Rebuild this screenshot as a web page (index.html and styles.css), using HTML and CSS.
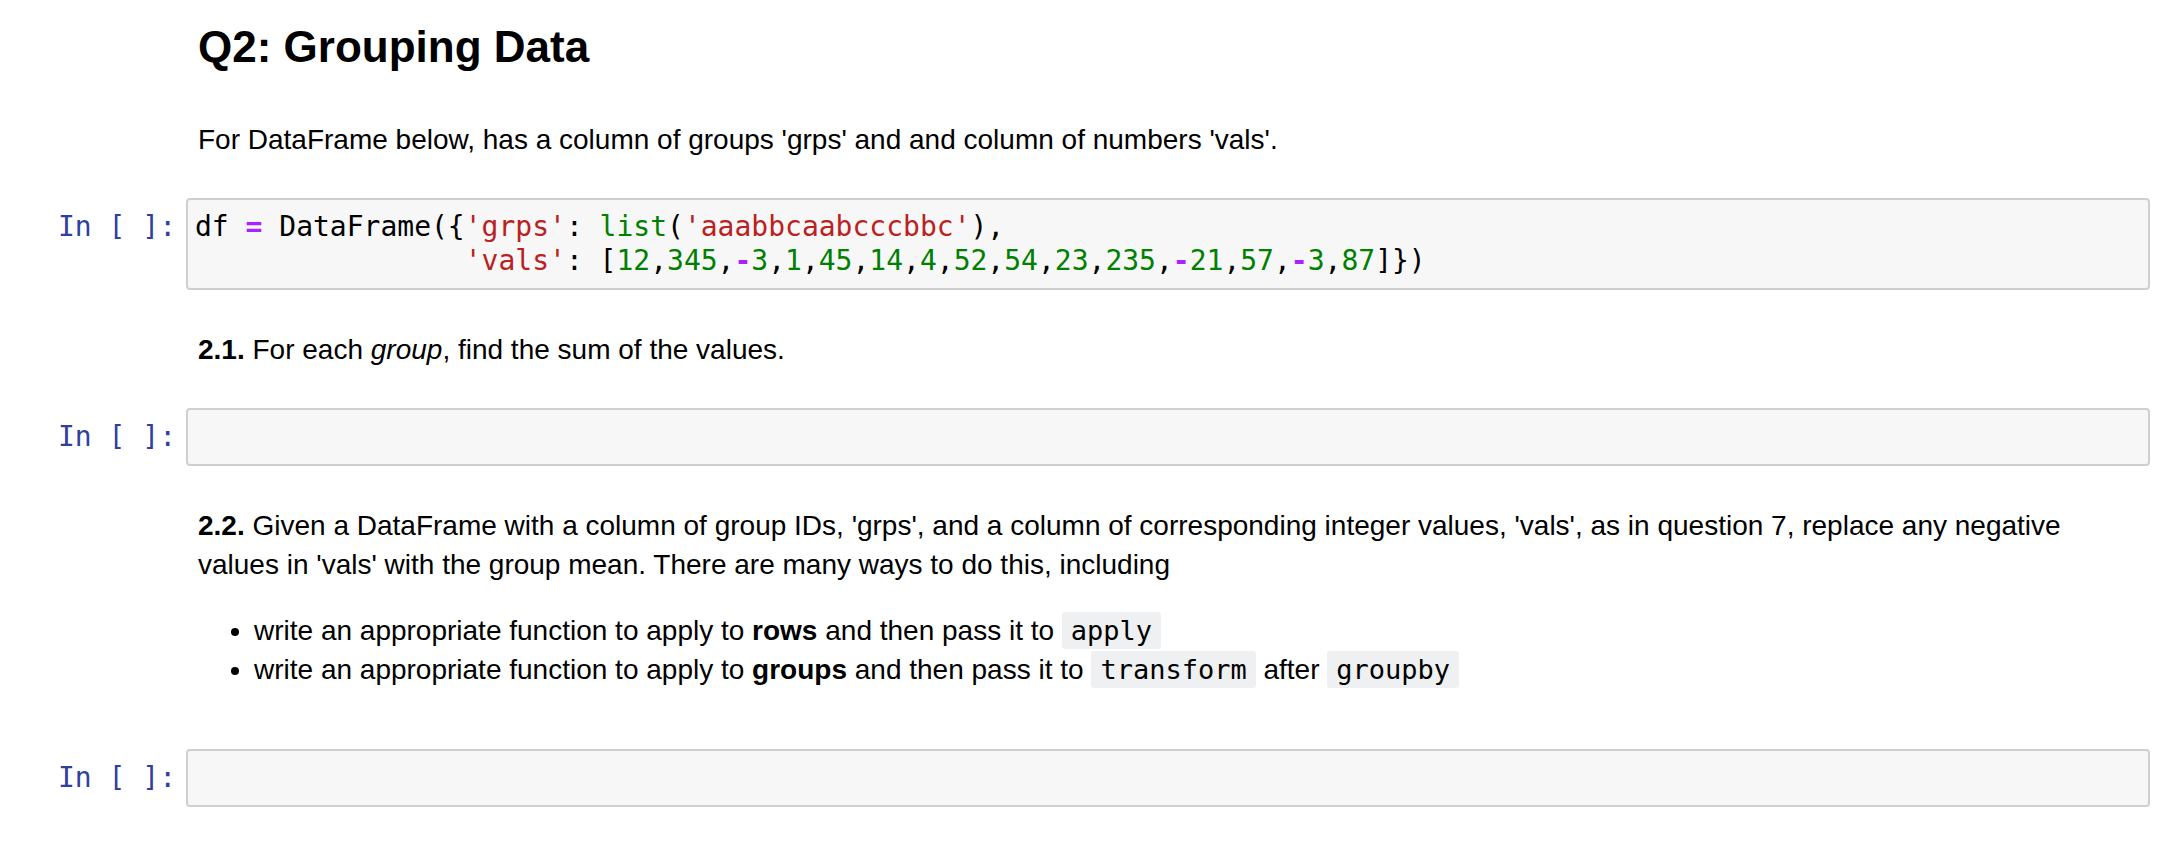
FILE: index.html
```html
<!DOCTYPE html>
<html>
<head>
<meta charset="utf-8">
<link rel="stylesheet" href="styles.css">
</head>
<body>
<div class="nb">
  <div class="cell md first">
    <div class="prompt"></div>
    <div class="md-body">
      <h2 class="title">Q2: Grouping Data</h2>
      <p class="para p1">For DataFrame below, has a column of groups 'grps' and and column of numbers 'vals'.</p>
    </div>
  </div>

  <div class="cell code c1">
    <div class="prompt">In&nbsp;[&nbsp;]:</div>
    <div class="input"><pre class="src">df <span class="op">=</span> DataFrame({<span class="str">'grps'</span>: <span class="bi">list</span>(<span class="str">'aaabbcaabcccbbc'</span>),
                <span class="str">'vals'</span>: [<span class="num">12</span>,<span class="num">345</span>,<span class="op">-</span><span class="num">3</span>,<span class="num">1</span>,<span class="num">45</span>,<span class="num">14</span>,<span class="num">4</span>,<span class="num">52</span>,<span class="num">54</span>,<span class="num">23</span>,<span class="num">235</span>,<span class="op">-</span><span class="num">21</span>,<span class="num">57</span>,<span class="op">-</span><span class="num">3</span>,<span class="num">87</span>]})</pre></div>
  </div>

  <div class="cell md m2">
    <div class="prompt"></div>
    <div class="md-body">
      <p class="para"><strong>2.1.</strong> For each <em>group</em>, find the sum of the values.</p>
    </div>
  </div>

  <div class="cell code c2">
    <div class="prompt">In&nbsp;[&nbsp;]:</div>
    <div class="input"><pre class="src"> </pre></div>
  </div>

  <div class="cell md m3">
    <div class="prompt"></div>
    <div class="md-body">
      <p class="para p22"><strong>2.2.</strong> Given a DataFrame with a column of group IDs, 'grps', and a column of corresponding integer values, 'vals', as in question 7, replace any negative values in 'vals' with the group mean. There are many ways to do this, including</p>
      <ul class="ways">
        <li>write an appropriate function to apply to <strong>rows</strong> and then pass it to <code class="ic">apply</code></li>
        <li>write an appropriate function to apply to <strong>groups</strong> and then pass it to <code class="ic">transform</code> after <code class="ic">groupby</code></li>
      </ul>
    </div>
  </div>

  <div class="cell code c3">
    <div class="prompt">In&nbsp;[&nbsp;]:</div>
    <div class="input"><pre class="src"> </pre></div>
  </div>
</div>
</body>
</html>
```

FILE: styles.css
```css
html, body {
  margin: 0;
  padding: 0;
  background: #ffffff;
}

.nb {
  display: flex;
  flex-direction: column;
  padding: 0 22px 0 0;
  font-family: "Liberation Sans", Arial, Helvetica, sans-serif;
  color: #000000;
}

.cell {
  display: flex;
  flex-direction: row;
  align-items: flex-start;
}

.prompt {
  flex: 0 0 186px;
  box-sizing: border-box;
  padding: 12px 10px 0 0;
  text-align: right;
  font-family: "DejaVu Sans Mono", monospace;
  font-size: 28px;
  line-height: 34px;
  color: #303F9F;
  white-space: nowrap;
}

.md .prompt {
  padding-top: 0;
}

.md-body {
  flex: 1 1 auto;
  min-width: 0;
  display: flex;
  flex-direction: column;
  padding: 0 48px 0 12px;
}

.title {
  margin: 0;
  font-size: 44px;
  line-height: 44px;
  font-weight: bold;
}

.para {
  margin: 0;
  font-size: 28px;
  line-height: 39px;
}

.first { margin-top: 25px; }
.p1 { margin-top: 51px; }
.c1 { margin-top: 39px; }
.m2 { margin-top: 40px; }
.c2 { margin-top: 39px; }
.m3 { margin-top: 40px; }
.c3 { margin-top: 60px; }

.input {
  flex: 1 1 auto;
  min-width: 0;
  background: #f7f7f7;
  border: 2px solid #cfcfcf;
  border-radius: 4px;
  padding: 10px 7px;
}

.src {
  margin: 0;
  font-family: "DejaVu Sans Mono", monospace;
  font-size: 28px;
  line-height: 34px;
  color: #000000;
  white-space: pre;
}

.op {
  color: #AA22FF;
  font-weight: bold;
}

.str { color: #BA2121; }
.bi { color: #008000; }
.num { color: #008000; }

.ways {
  margin: 27px 0 0 0;
  padding-left: 56px;
  font-size: 28px;
  line-height: 39px;
}

.ic {
  font-family: "DejaVu Sans Mono", monospace;
  font-size: 27px;
  background: #eff0f1;
  padding: 3px 9px;
  border-radius: 3px;
}
```
